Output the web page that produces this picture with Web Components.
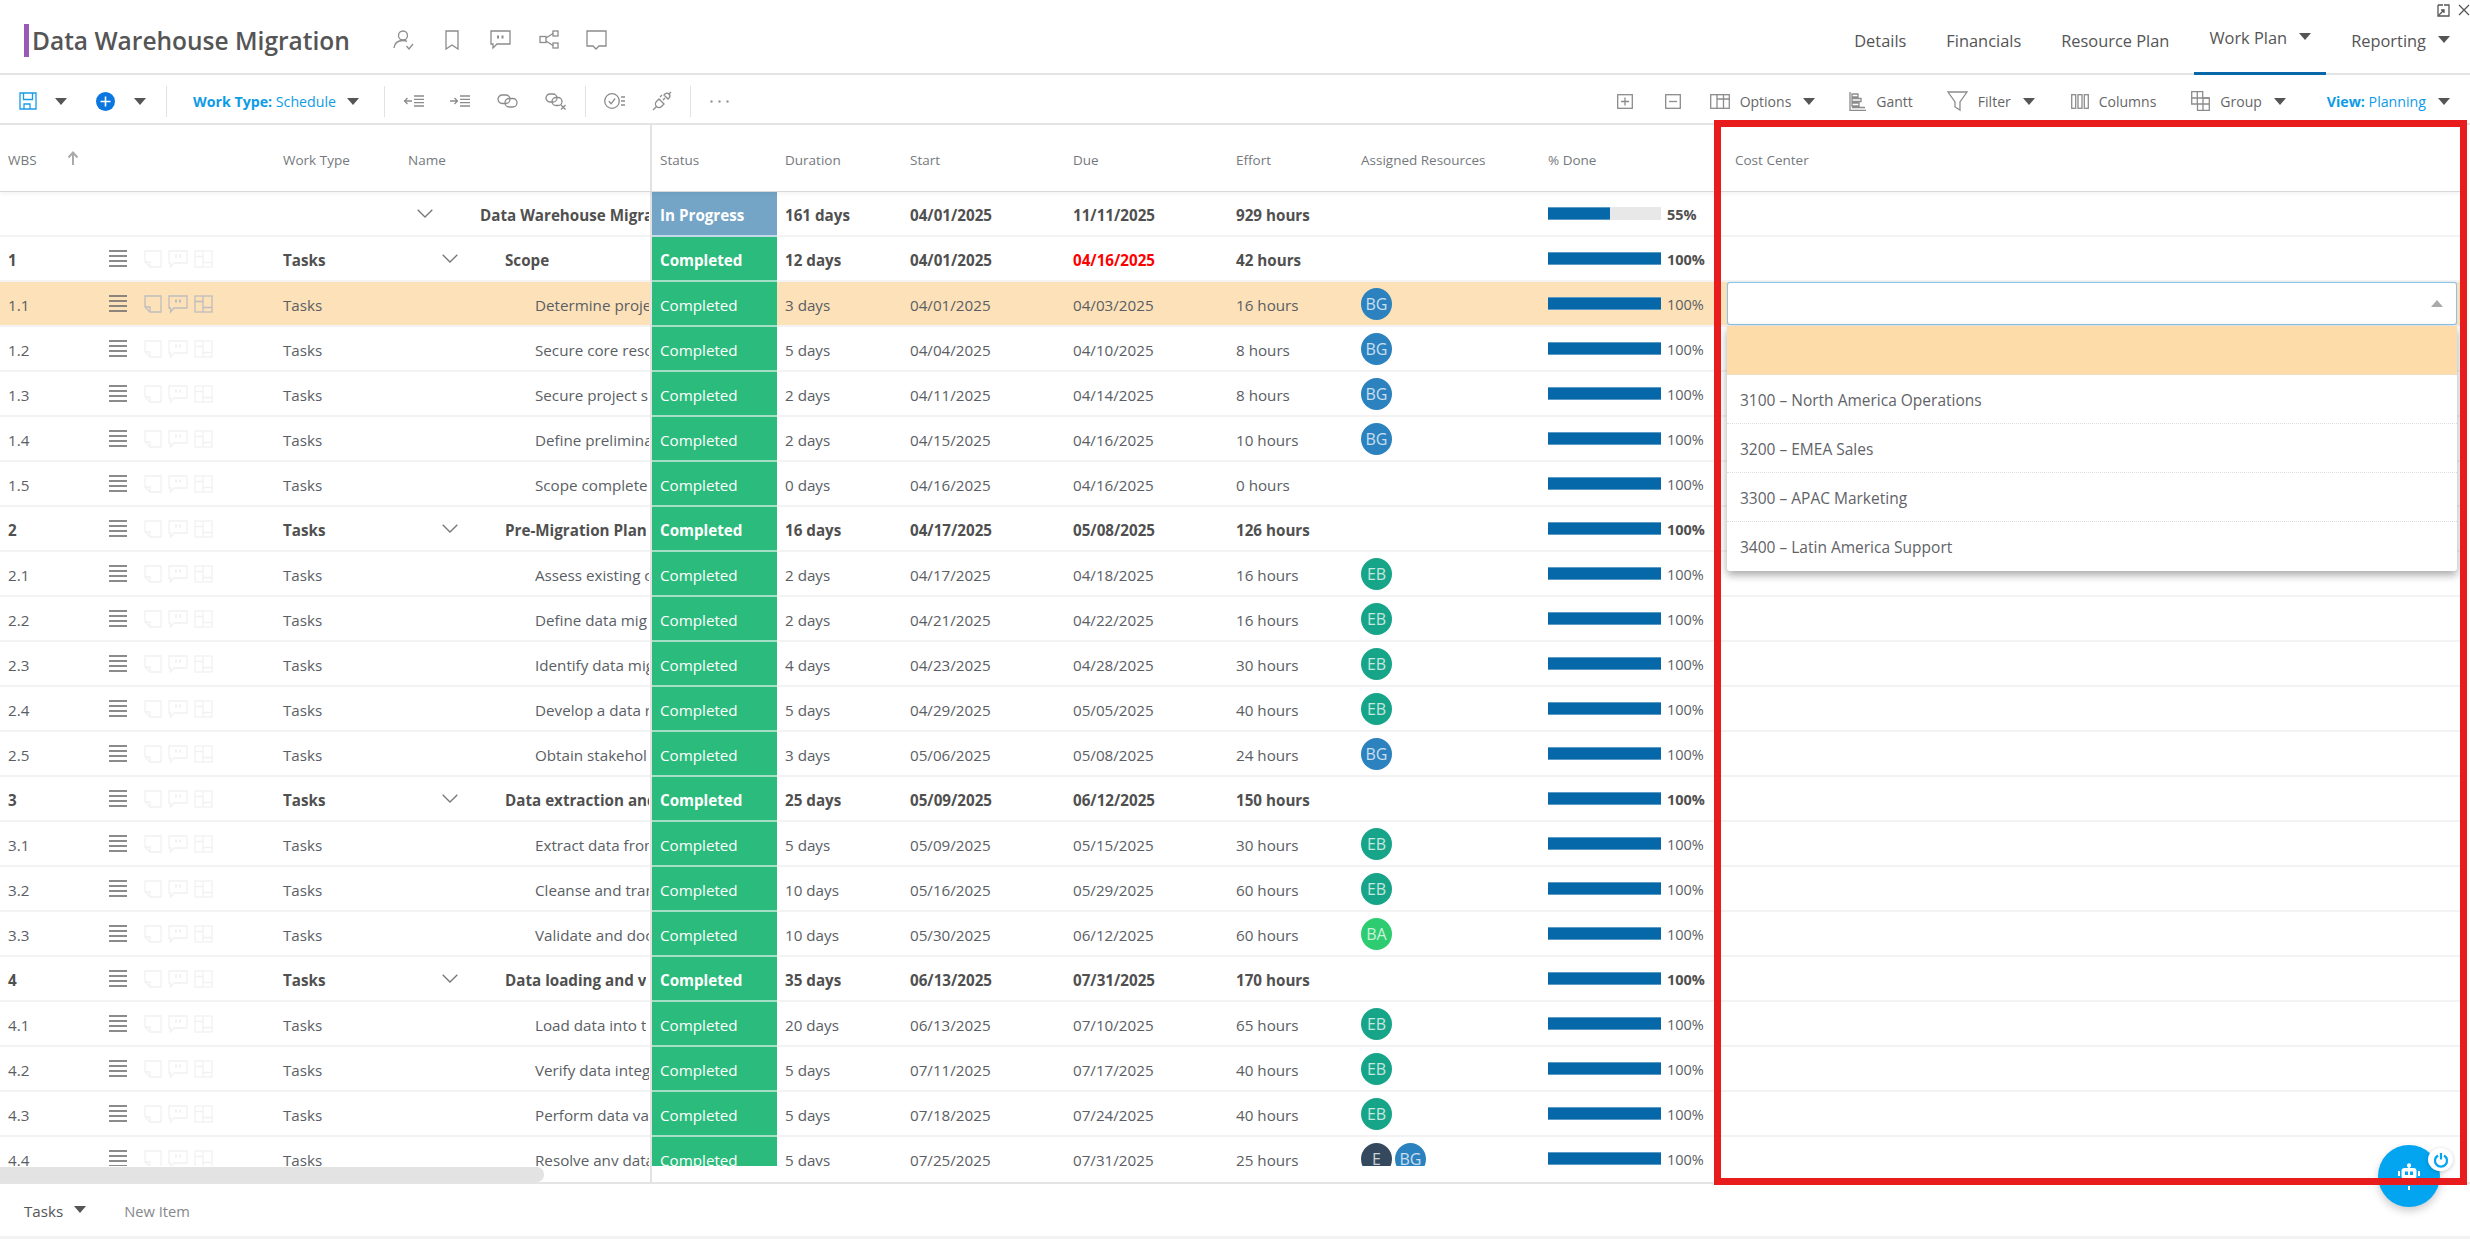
<!DOCTYPE html>
<html>
<head>
<meta charset="utf-8">
<title>Data Warehouse Migration</title>
<style>
  html, body { margin: 0; height: 100%; overflow: hidden; background: #fff; }
  body { font-family: "Open Sans", "Noto Sans", sans-serif; color: #555; }
  app-shell { --cols: 109px 166px 125px 250px 2px 125px 125px 163px 163px 125px 187px 187px 733px; }
</style>
</head>
<body>
<app-shell>
  <app-header slot="header" heading="Data Warehouse Migration">
    <ui-icon slot="actions" name="user" style="margin-left:0"></ui-icon>
    <ui-icon slot="actions" name="bookmark" style="margin-left:31px"></ui-icon>
    <ui-icon slot="actions" name="comment" style="margin-left:31px"></ui-icon>
    <ui-icon slot="actions" name="share" style="margin-left:28px"></ui-icon>
    <ui-icon slot="actions" name="note" style="margin-left:27px"></ui-icon>
    <nav-tab slot="tabs">Details</nav-tab>
    <nav-tab slot="tabs">Financials</nav-tab>
    <nav-tab slot="tabs">Resource Plan</nav-tab>
    <nav-tab slot="tabs" active caret>Work Plan</nav-tab>
    <nav-tab slot="tabs" caret>Reporting</nav-tab>
  </app-header>

  <action-toolbar slot="toolbar">
    <ui-icon slot="start" name="save" style="margin-left:19px;color:#1a9be8"></ui-icon>
    <ui-icon slot="start" name="caret" style="margin-left:18px"></ui-icon>
    <ui-icon slot="start" name="plus" style="margin-left:29px"></ui-icon>
    <ui-icon slot="start" name="caret" style="margin-left:19px"></ui-icon>
    <tool-sep slot="start" style="margin-left:20px"></tool-sep>
    <tool-label slot="start" style="margin-left:26px" key="Work Type:" value="Schedule"></tool-label>
    <ui-icon slot="start" name="caret" style="margin-left:11px"></ui-icon>
    <tool-sep slot="start" style="margin-left:25px"></tool-sep>
    <ui-icon slot="start" name="outdent" style="margin-left:19px"></ui-icon>
    <ui-icon slot="start" name="indent" style="margin-left:26px"></ui-icon>
    <ui-icon slot="start" name="link" style="margin-left:27px"></ui-icon>
    <ui-icon slot="start" name="unlink" style="margin-left:27px"></ui-icon>
    <tool-sep slot="start" style="margin-left:19px"></tool-sep>
    <ui-icon slot="start" name="checks" style="margin-left:18px"></ui-icon>
    <ui-icon slot="start" name="plug" style="margin-left:27px"></ui-icon>
    <tool-sep slot="start" style="margin-left:18px"></tool-sep>
    <ui-icon slot="start" name="more" style="margin-left:19px"></ui-icon>

    <ui-icon slot="end" name="plusbox"></ui-icon>
    <ui-icon slot="end" name="minusbox" style="margin-left:32px"></ui-icon>
    <tool-button slot="end" icon="options" caret style="margin-left:29px">Options</tool-button>
    <tool-button slot="end" icon="gantt" style="margin-left:34px">Gantt</tool-button>
    <tool-button slot="end" icon="filter" caret style="margin-left:34px">Filter</tool-button>
    <tool-button slot="end" icon="columns" style="margin-left:36px">Columns</tool-button>
    <tool-button slot="end" icon="group" caret style="margin-left:35px">Group</tool-button>
    <tool-label slot="end" style="margin-left:41px" key="View:" value="Planning"></tool-label>
    <ui-icon slot="end" name="caret" style="margin-left:12px"></ui-icon>
  </action-toolbar>

  <work-grid slot="grid"></work-grid>

  <new-item-bar slot="footer"></new-item-bar>
</app-shell>

<annotation-frame></annotation-frame>
<assistant-fab></assistant-fab>

<script>
const ICONS = {
  user: [21, 20, '<circle cx="10" cy="5.5" r="4.5"/><path d="M1 18c.5-5 4-7.5 9-7.5 1.5 0 3 .3 4 .8"/><path d="M13.5 16l2.5 3 4-5"/>'],
  bookmark: [14, 20, '<path d="M1 1h12v18l-6-4-6 4z"/>'],
  comment: [21, 19, '<path d="M1 1h19v13H7l-4 4v-4H1z"/><path d="M8 5.5v3M12.5 5.5v3" stroke-width="2"/>'],
  share: [20, 19, '<rect x="1" y="6.5" width="6" height="6"/><rect x="14" y="1" width="5" height="5"/><rect x="14" y="13" width="5" height="5"/><path d="M7 8l7-4.5M7 11l7 4.5"/>'],
  note: [21, 20, '<path d="M1 1h19v15h-7l-3 3-3-3H1z"/>'],
  save: [18, 18, '<path d="M1 1h16v16H1z"/><path d="M4.5 1v6.500h9V1M5 17v-5h6v5"/>'],
  plus: [19, 19, '<circle cx="9.500" cy="9.500" r="9.500" fill="#0a77e0" stroke="none"/><path d="M9.500 4.500v10M4.500 9.500h10" stroke="#fff" stroke-width="1.600"/>'],
  caret: [12, 7, '<path d="M0 0h12L6 7z" fill="#555" stroke="none"/>'],
  outdent: [20, 12, '<path d="M8 6H.5M3.500 3L.5 6l3 3"/><path d="M10 1h10M10 4.300h10M10 7.600h10M10 11h10"/>'],
  indent: [20, 12, '<path d="M0 6h7.500M4.500 3l3 3-3 3"/><path d="M10 1h10M10 4.300h10M10 7.600h10M10 11h10"/>'],
  link: [21, 14, '<rect x="1" y="1" width="12" height="8.500" rx="4.200"/><rect x="8" y="4.500" width="12" height="8.500" rx="4.200"/>'],
  unlink: [21, 17, '<rect x="1" y="1" width="11" height="8" rx="4"/><rect x="7" y="4.500" width="10" height="8" rx="4"/><path d="M16 12l4.500 4.500M20.500 12L16 16.500"/>'],
  checks: [21, 18, '<circle cx="8" cy="9" r="7.300"/><path d="M4.800 9.300l2.300 2.500 4-5.300M17 5h4M17 9h4M17 13h4"/>'],
  plug: [20, 20, '<path d="M1 19l3.500-3.500M19 1l-2.500 2.500"/><path d="M7 8l5 5-2.500 2.500a3.500 3.500 0 0 1-5-5zM11 9l2-2M8 6l2-2"/><path d="M12 4l4 4 1-1a2.800 2.800 0 0 0-4-4z"/>'],
  more: [19, 3, '<circle cx="1.500" cy="1.500" r="1.200" fill="#999" stroke="none"/><circle cx="9.500" cy="1.500" r="1.200" fill="#999" stroke="none"/><circle cx="17.500" cy="1.500" r="1.200" fill="#999" stroke="none"/>'],
  plusbox: [16, 15, '<rect x=".7" y=".7" width="14.600" height="13.600"/><path d="M8 3.500v8M4 7.500h8"/>'],
  minusbox: [16, 15, '<rect x=".7" y=".7" width="14.600" height="13.600"/><path d="M4 7.500h8"/>'],
  options: [20, 15, '<rect x=".7" y=".7" width="18.600" height="13.600"/><path d="M7 .7v13.600M13.500 .7v13.600M7 5h12.300"/>'],
  gantt: [17, 19, '<path d="M1 0v18.300h16"/><path d="M3 2h6v3H3zM3 6.500h9v3H3zM3 11h7v3H3zM3 15.500h13"/>'],
  filter: [21, 20, '<path d="M1 1h19l-7 10v8l-5-3v-5z"/>'],
  columns: [18, 15, '<rect x=".7" y=".7" width="4" height="13.600"/><rect x="7" y=".7" width="4" height="13.600"/><rect x="13.300" y=".7" width="4" height="13.600"/>'],
  group: [19, 20, '<path d="M.7.7h11v6.300h6.600v12.300H6.500V13H.7z"/><path d="M6.300.7V13M.7 7h17.600M6.500 13h11.800M12 7v12.300"/>'],
  drag: [18, 17, '<path d="M0 1h18M0 6h18M0 11h18M0 16h18" stroke-width="1.700"/>'],
  rownote: [18, 18, '<path d="M1 1h16v16H6l-5-5z"/><path d="M1 12h5v5"/>'],
  rowtalk: [20, 18, '<path d="M1 1h18v12H6l-3.500 4v-4H1z"/><path d="M8 4.500v3M12 4.500v3" stroke-width="2"/>'],
  rowboard: [19, 18, '<rect x="1" y="1" width="17" height="16"/><path d="M9 1v16M1 6.500h8M9 12.500h9"/>'],
  chevron: [16, 9, '<path d="M.7.7L8 8l7.300-7.300"/>'],
  sort: [12, 14, '<path d="M6 14V2M1.500 6.500L6 1.500l4.500 5" stroke-width="2"/>'],
  expand: [13, 13, '<path d="M7 1h5v11H1V6"/><path d="M1 1h5M1 1v5M1.500 11.500L7 6M4 6h3v3"/>'],
  close: [12, 12, '<path d="M1 1l10 10M11 1L1 11"/>'],
  robot: [24, 30, '<path d="M12 0v4"/><circle cx="12" cy="1.500" r="1.500" fill="#fff"/><rect x="4.500" y="4" width="15" height="11" rx="3" fill="#fff" stroke="none"/><rect x="8" y="7.500" width="3" height="3.500" fill="#03a5f0" stroke="none"/><rect x="13" y="7.500" width="3" height="3.500" fill="#03a5f0" stroke="none"/><path d="M2 7v5M22 7v5M12 22v4" stroke-width="2"/>'],
  power: [14, 15, '<path d="M4 3.500a6 6 0 1 0 6 0M7 1v6.500" stroke-width="2.200"/>']
};

class UiIcon extends HTMLElement {
  connectedCallback() {
    if (this.shadowRoot) return;
    const [w, h, body] = ICONS[this.getAttribute("name")];
    this.attachShadow({ mode: "open" }).innerHTML = `
      <style>
        :host { display: inline-flex; flex: none; color: #8c8c8c; }
        svg { display: block; fill: none; stroke: currentColor; stroke-width: 1.3; overflow: visible; }
      </style>
      <svg width="${w}" height="${h}" viewBox="0 0 ${w} ${h}">${body}</svg>`;
  }
}

class AppShell extends HTMLElement {
  constructor() {
    super();
    this.attachShadow({ mode: "open" }).innerHTML = `
      <style>
        :host { display: flex; flex-direction: column; height: 1239px; width: 2470px; }
      </style>
      <slot name="header"></slot>
      <slot name="toolbar"></slot>
      <slot name="grid"></slot>
      <slot name="footer"></slot>`;
  }
}

class AppHeader extends HTMLElement {
  connectedCallback() {
    if (this.shadowRoot) return;
    this.attachShadow({ mode: "open" }).innerHTML = `
      <style>
        :host { display: flex; align-items: center; position: relative; height: 75px; box-sizing: border-box;
          border-bottom: 2px solid #e4e4e4; }
        .title { margin: 8px 0 0 24px; border-left: 5px solid #9b59b6; padding-left: 3px; height: 33px; line-height: 33px;
          font-size: 24.500px; font-weight: 600; color: #555; white-space: nowrap; width: 361px; flex: none; }
        .actions { display: flex; align-items: center; margin-top: 6px; }
        .tabs { margin-left: auto; display: flex; align-self: stretch; padding-right: 5px; }
        .win { position: absolute; top: 4px; right: 0; display: flex; gap: 8px; color: #555; }
        .win ui-icon { color: #555; }
      </style>
      <div class="title">${this.getAttribute("heading")}</div>
      <div class="actions"><slot name="actions"></slot></div>
      <div class="tabs"><slot name="tabs"></slot></div>
      <div class="win"><ui-icon name="expand"></ui-icon><ui-icon name="close"></ui-icon></div>`;
  }
}

class NavTab extends HTMLElement {
  connectedCallback() {
    if (this.shadowRoot) return;
    const caret = this.hasAttribute("caret") ? '<ui-icon name="caret" class="c"></ui-icon>' : "";
    this.attachShadow({ mode: "open" }).innerHTML = `
      <style>
        :host { display: flex; align-items: center; box-sizing: border-box; height: 75px; margin-bottom: -2px;
          padding: 6px 15px 0; margin-left: 10px; font-size: 16.400px; color: #555; white-space: nowrap; }
        :host([active]) { border-bottom: 3px solid #0668a8; padding-top: 3px; }
        .c { margin-left: 12px; margin-top: -2px; }
      </style>
      <slot></slot>${caret}`;
  }
}

class ActionToolbar extends HTMLElement {
  constructor() {
    super();
    this.attachShadow({ mode: "open" }).innerHTML = `
      <style>
        :host { display: flex; align-items: center; justify-content: space-between; height: 50px;
          box-sizing: border-box; border-bottom: 2px solid #e4e4e4; padding: 4px 20px 0 0; }
        .g { display: flex; align-items: center; }
      </style>
      <div class="g"><slot name="start"></slot></div>
      <div class="g"><slot name="end"></slot></div>`;
  }
}

class ToolSep extends HTMLElement {
  constructor() {
    super();
    this.attachShadow({ mode: "open" }).innerHTML = `
      <style>:host { display: block; width: 1px; height: 31px; background: #e2e2e2; flex: none; }</style>`;
  }
}

class ToolLabel extends HTMLElement {
  connectedCallback() {
    if (this.shadowRoot) return;
    this.attachShadow({ mode: "open" }).innerHTML = `
      <style>
        :host { display: inline-block; font-size: 14.200px; color: #0e9be6; white-space: nowrap; }
        b { font-weight: 700; }
      </style>
      <b>${this.getAttribute("key")}</b> ${this.getAttribute("value")}`;
  }
}

class ToolButton extends HTMLElement {
  connectedCallback() {
    if (this.shadowRoot) return;
    const caret = this.hasAttribute("caret") ? '<ui-icon name="caret" class="c"></ui-icon>' : "";
    this.attachShadow({ mode: "open" }).innerHTML = `
      <style>
        :host { display: inline-flex; align-items: center; font-size: 14px; color: #666; white-space: nowrap; }
        .i { margin-right: 10px; }
        .c { margin-left: 12px; }
      </style>
      <ui-icon class="i" name="${this.getAttribute("icon")}"></ui-icon><slot></slot>${caret}`;
  }
}

class StatusCell extends HTMLElement {
  connectedCallback() {
    if (this.shadowRoot) return;
    this.attachShadow({ mode: "open" }).innerHTML = `
      <style>
        :host { display: flex; align-items: center; box-sizing: border-box; height: 45px;
          padding: 3px 0 0 8px; background: #2bbb7c; border-bottom: 2px solid #a3dfc4; color: #fff; font-size: 15.200px; }
        :host([state="In Progress"]) { background: #74a5c6; border-bottom-color: #c3d9e7; }
      </style>
      <slot></slot>`;
  }
}

class AvatarChip extends HTMLElement {
  connectedCallback() {
    if (this.shadowRoot) return;
    const colours = { BG: "#2b82bf", EB: "#17a589", BA: "#2ecc71", E: "#34495e" };
    const who = this.textContent.trim();
    this.attachShadow({ mode: "open" }).innerHTML = `
      <style>
        :host { display: flex; align-items: center; justify-content: center; width: 31px; height: 32px; border-radius: 50%;
          background: ${colours[who]}; color: rgba(255,255,255,.75); font-size: 16px; flex: none; }
      </style>
      <slot></slot>`;
  }
}

class ProgressMeter extends HTMLElement {
  connectedCallback() {
    if (this.shadowRoot) return;
    const done = this.getAttribute("done");
    this.attachShadow({ mode: "open" }).innerHTML = `
      <style>
        :host { display: flex; align-items: center; gap: 6px; }
        .t { width: 113px; height: 13px; background: #e8e8e8; flex: none; }
        .f { height: 100%; box-sizing: border-box; width: ${done}%; background: #0668a8;
          border-top: 1px solid #5c9bc5; border-bottom: 1px solid #5c9bc5; }
        span { font-size: 14.500px; margin-top: 1px; }
      </style>
      <div class="t"><div class="f"></div></div><span>${done}%</span>`;
  }
}

class CostSelect extends HTMLElement {
  connectedCallback() {
    if (this.shadowRoot) return;
    const options = ["", "3100 – North America Operations", "3200 – EMEA Sales", "3300 – APAC Marketing", "3400 – Latin America Support"];
    this.attachShadow({ mode: "open" }).innerHTML = `
      <style>
        :host { display: block; position: relative; width: 730px; height: 43px; font-size: 15.500px; font-weight: 400; color: #5f6368; }
        .box { height: 43px; box-sizing: border-box; background: #fff; border: 1px solid #8cc3e8; border-radius: 3px;
          box-shadow: 0 0 1px #8cc3e8; display: flex; align-items: center; justify-content: flex-end; padding-right: 13px; }
        .up { width: 0; height: 0; border: 6px solid transparent; border-top: 0; border-bottom: 7px solid #aaa; }
        ul { position: absolute; left: 0; right: 0; top: 44px; margin: 0; padding: 0; list-style: none; background: #fff;
          border-radius: 0 0 3px 3px; box-shadow: 0 4px 8px rgba(0,0,0,.35); }
        li { height: 49px; box-sizing: border-box; padding: 1px 13px 0; line-height: 48px; border-bottom: 1px dotted #ddd; }
        li:first-child { background: #fddcaa; }
        li:last-child { border-bottom: 0; }
      </style>
      <div class="box"><div class="up"></div></div>
      <ul>${options.map(o => `<li>${o}</li>`).join("")}</ul>`;
  }
}

class GridHead extends HTMLElement {
  constructor() {
    super();
    const labels = ["Status", "Duration", "Start", "Due", "Effort", "Assigned Resources", "% Done", "Cost Center"];
    this.attachShadow({ mode: "open" }).innerHTML = `
      <style>
        :host { display: grid; grid-template-columns: var(--cols); height: 67px; box-sizing: border-box; position: relative; z-index: 2;
          background: #fff; border-bottom: 1px solid #d8d8d8; box-shadow: 0 2px 4px rgba(0,0,0,.05);
          font-size: 13.500px; color: #75797e; align-items: center; width: 2460px; }
        div { padding: 3px 0 0 8px; white-space: nowrap; }
        .sep { padding: 0; background: #e2e2e2; align-self: stretch; }
        .sort { display: flex; align-items: center; gap: 30px; }
        .sort ui-icon { color: #aaa; margin-top: -3px; }
      </style>
      <div class="sort" style="grid-column: span 2">WBS <ui-icon name="sort"></ui-icon></div>
      <div style="grid-column: 3">Work Type</div>
      <div>Name</div>
      <div class="sep"></div>
      ${labels.map(l => `<div>${l}</div>`).join("")}`;
  }
}

class GridRow extends HTMLElement {
  connectedCallback() {
    if (this.shadowRoot) return;
    const a = n => this.getAttribute(n) || "";
    const level = Number(a("level"));
    const pad = [17, 42, 135][level];
    const chevron = level < 2 ? '<ui-icon name="chevron" class="chev"></ui-icon>' : "";
    const tools = a("wbs") ? `
        <ui-icon name="drag" class="drag"></ui-icon>
        <ui-icon name="rownote" class="t"></ui-icon>
        <ui-icon name="rowtalk" class="t"></ui-icon>
        <ui-icon name="rowboard" class="t"></ui-icon>` : "";
    const people = a("res").split(" ").filter(Boolean).map(p => `<avatar-chip>${p}</avatar-chip>`).join("");
    this.attachShadow({ mode: "open" }).innerHTML = `
      <style>
        :host { display: grid; grid-template-columns: var(--cols); height: 45px; width: 2460px; position: relative;
          font-size: 15.200px; color: #5a5e64; box-shadow: inset 0 -2px 0 #f3f3f3; }
        :host([bold]) { font-weight: 700; color: #505050; }
        :host([selected]) { background: #fde1b8; z-index: 3; }
        .c { display: flex; align-items: center; height: 43px; padding: 3px 0 0 8px; box-sizing: border-box; white-space: nowrap; overflow: hidden; }
        .tools { padding: 0; gap: 0; overflow: visible; }
        .tools .drag { color: #666; margin-right: 17px; }
        .tools .t { color: #f1f1f1; margin-right: 6px; }
        :host([selected]) .tools .t { color: #bdbdbd; }
        .name { padding-left: ${pad}px; padding-right: 1px; }
        .name span { overflow: hidden; min-width: 0; }
        .chev { color: #777; margin-right: 47px; margin-top: -3px; }
        .sep { background: #e2e2e2; }
        .late { color: #f00; }
        .res { gap: 3px; padding-top: 0; overflow: visible; }
        .done { padding-top: 0; overflow: visible; }
        .cost { padding: 0; overflow: visible; align-items: flex-start; }
      </style>
      <div class="c">${a("wbs")}</div>
      <div class="c tools">${tools}</div>
      <div class="c">${a("wbs") ? "Tasks" : ""}</div>
      <div class="c name">${chevron}<span>${a("name")}</span></div>
      <div class="sep"></div>
      <status-cell state="${a("status")}">${a("status")}</status-cell>
      <div class="c">${a("dur")}</div>
      <div class="c">${a("start")}</div>
      <div class="c ${this.hasAttribute("late") ? "late" : ""}">${a("due")}</div>
      <div class="c">${a("effort")}</div>
      <div class="c res">${people}</div>
      <div class="c done"><progress-meter done="${a("done")}"></progress-meter></div>
      <div class="c cost"><slot></slot></div>`;
  }
}

const ROWS = [
  ["", 0, "Data Warehouse Migra", "In Progress", "161 days", "04/01/2025", "11/11/2025", "929 hours", "", 55, "bold"],
  ["1", 1, "Scope", "Completed", "12 days", "04/01/2025", "04/16/2025", "42 hours", "", 100, "bold late"],
  ["1.1", 2, "Determine proje", "Completed", "3 days", "04/01/2025", "04/03/2025", "16 hours", "BG", 100, "selected"],
  ["1.2", 2, "Secure core resc", "Completed", "5 days", "04/04/2025", "04/10/2025", "8 hours", "BG", 100],
  ["1.3", 2, "Secure project s", "Completed", "2 days", "04/11/2025", "04/14/2025", "8 hours", "BG", 100],
  ["1.4", 2, "Define prelimina", "Completed", "2 days", "04/15/2025", "04/16/2025", "10 hours", "BG", 100],
  ["1.5", 2, "Scope complete", "Completed", "0 days", "04/16/2025", "04/16/2025", "0 hours", "", 100],
  ["2", 1, "Pre-Migration Plan", "Completed", "16 days", "04/17/2025", "05/08/2025", "126 hours", "", 100, "bold"],
  ["2.1", 2, "Assess existing c", "Completed", "2 days", "04/17/2025", "04/18/2025", "16 hours", "EB", 100],
  ["2.2", 2, "Define data mig", "Completed", "2 days", "04/21/2025", "04/22/2025", "16 hours", "EB", 100],
  ["2.3", 2, "Identify data mig", "Completed", "4 days", "04/23/2025", "04/28/2025", "30 hours", "EB", 100],
  ["2.4", 2, "Develop a data r", "Completed", "5 days", "04/29/2025", "05/05/2025", "40 hours", "EB", 100],
  ["2.5", 2, "Obtain stakehol", "Completed", "3 days", "05/06/2025", "05/08/2025", "24 hours", "BG", 100],
  ["3", 1, "Data extraction and", "Completed", "25 days", "05/09/2025", "06/12/2025", "150 hours", "", 100, "bold"],
  ["3.1", 2, "Extract data from", "Completed", "5 days", "05/09/2025", "05/15/2025", "30 hours", "EB", 100],
  ["3.2", 2, "Cleanse and tran", "Completed", "10 days", "05/16/2025", "05/29/2025", "60 hours", "EB", 100],
  ["3.3", 2, "Validate and doc", "Completed", "10 days", "05/30/2025", "06/12/2025", "60 hours", "BA", 100],
  ["4", 1, "Data loading and v", "Completed", "35 days", "06/13/2025", "07/31/2025", "170 hours", "", 100, "bold"],
  ["4.1", 2, "Load data into t", "Completed", "20 days", "06/13/2025", "07/10/2025", "65 hours", "EB", 100],
  ["4.2", 2, "Verify data integ", "Completed", "5 days", "07/11/2025", "07/17/2025", "40 hours", "EB", 100],
  ["4.3", 2, "Perform data va", "Completed", "5 days", "07/18/2025", "07/24/2025", "40 hours", "EB", 100],
  ["4.4", 2, "Resolve any data", "Completed", "5 days", "07/25/2025", "07/31/2025", "25 hours", "E BG", 100]
];

class WorkGrid extends HTMLElement {
  connectedCallback() {
    if (this.shadowRoot) return;
    this.attachShadow({ mode: "open" }).innerHTML = `
      <style>
        :host { display: block; }
        .body { height: 974px; overflow: hidden; }
        .track { display: grid; grid-template-columns: 650px 1fr; height: 16px; border-bottom: 2px solid #e4e4e4; }
        .thumb { width: 544px; height: 15px; margin-top: 1px; background: #e3e3e3; border-radius: 0 7px 7px 0; }
        .rest { border-left: 2px solid #e2e2e2; }
      </style>
      <grid-head></grid-head>
      <div class="body"></div>
      <div class="track"><div><div class="thumb"></div></div><div class="rest"></div></div>`;
    const body = this.shadowRoot.querySelector(".body");
    ROWS.forEach(([wbs, level, name, status, dur, start, due, effort, res, done, flags]) => {
      const row = document.createElement("grid-row");
      Object.entries({ wbs, level, name, status, dur, start, due, effort, res, done })
        .forEach(([k, v]) => row.setAttribute(k, v));
      (flags || "").split(" ").filter(Boolean).forEach(f => row.setAttribute(f, ""));
      if (row.hasAttribute("selected")) row.appendChild(document.createElement("cost-select"));
      body.appendChild(row);
    });
  }
}

class NewItemBar extends HTMLElement {
  constructor() {
    super();
    this.attachShadow({ mode: "open" }).innerHTML = `
      <style>
        :host { display: flex; align-items: center; box-sizing: border-box; padding: 2px 0 0 24px;
          border-bottom: 3px solid #f3f3f3; height: 55px; }
        .type { font-size: 15.200px; color: #555; }
        ui-icon { margin-left: 11px; margin-top: -3px; }
        .new { font-size: 14.700px; color: #85888c; margin-left: 38px; }
      </style>
      <span class="type">Tasks</span><ui-icon name="caret"></ui-icon><span class="new">New Item</span>`;
  }
}

class AnnotationFrame extends HTMLElement {
  constructor() {
    super();
    this.attachShadow({ mode: "open" }).innerHTML = `
      <style>
        :host { display: block; position: absolute; left: 1714px; top: 120px; width: 753px; height: 1065px; box-sizing: border-box;
          border: 7px solid #e81c1c; pointer-events: none; z-index: 5; }
      </style>`;
  }
}

class AssistantFab extends HTMLElement {
  constructor() {
    super();
    this.attachShadow({ mode: "open" }).innerHTML = `
      <style>
        :host { display: flex; align-items: center; justify-content: center; position: absolute; left: 2378px; top: 1145px;
          width: 62px; height: 62px; border-radius: 50%; background: #03a5f0; box-shadow: 0 4px 8px rgba(0,0,0,.2); z-index: 4; }
        ui-icon { color: #fff; margin-top: 6px; }
        .pw { position: absolute; left: 50px; top: 3px; width: 25px; height: 23px; border-radius: 50%; background: #fff;
          display: flex; align-items: center; justify-content: center; box-shadow: 0 1px 4px rgba(0,0,0,.2); }
        .pw ui-icon { color: #03a5f0; margin: 0; }
      </style>
      <ui-icon name="robot"></ui-icon>
      <div class="pw"><ui-icon name="power"></ui-icon></div>`;
  }
}

customElements.define("ui-icon", UiIcon);
customElements.define("app-shell", AppShell);
customElements.define("app-header", AppHeader);
customElements.define("nav-tab", NavTab);
customElements.define("action-toolbar", ActionToolbar);
customElements.define("tool-sep", ToolSep);
customElements.define("tool-label", ToolLabel);
customElements.define("tool-button", ToolButton);
customElements.define("status-cell", StatusCell);
customElements.define("avatar-chip", AvatarChip);
customElements.define("progress-meter", ProgressMeter);
customElements.define("cost-select", CostSelect);
customElements.define("grid-head", GridHead);
customElements.define("grid-row", GridRow);
customElements.define("work-grid", WorkGrid);
customElements.define("new-item-bar", NewItemBar);
customElements.define("annotation-frame", AnnotationFrame);
customElements.define("assistant-fab", AssistantFab);
</script>
</body>
</html>
